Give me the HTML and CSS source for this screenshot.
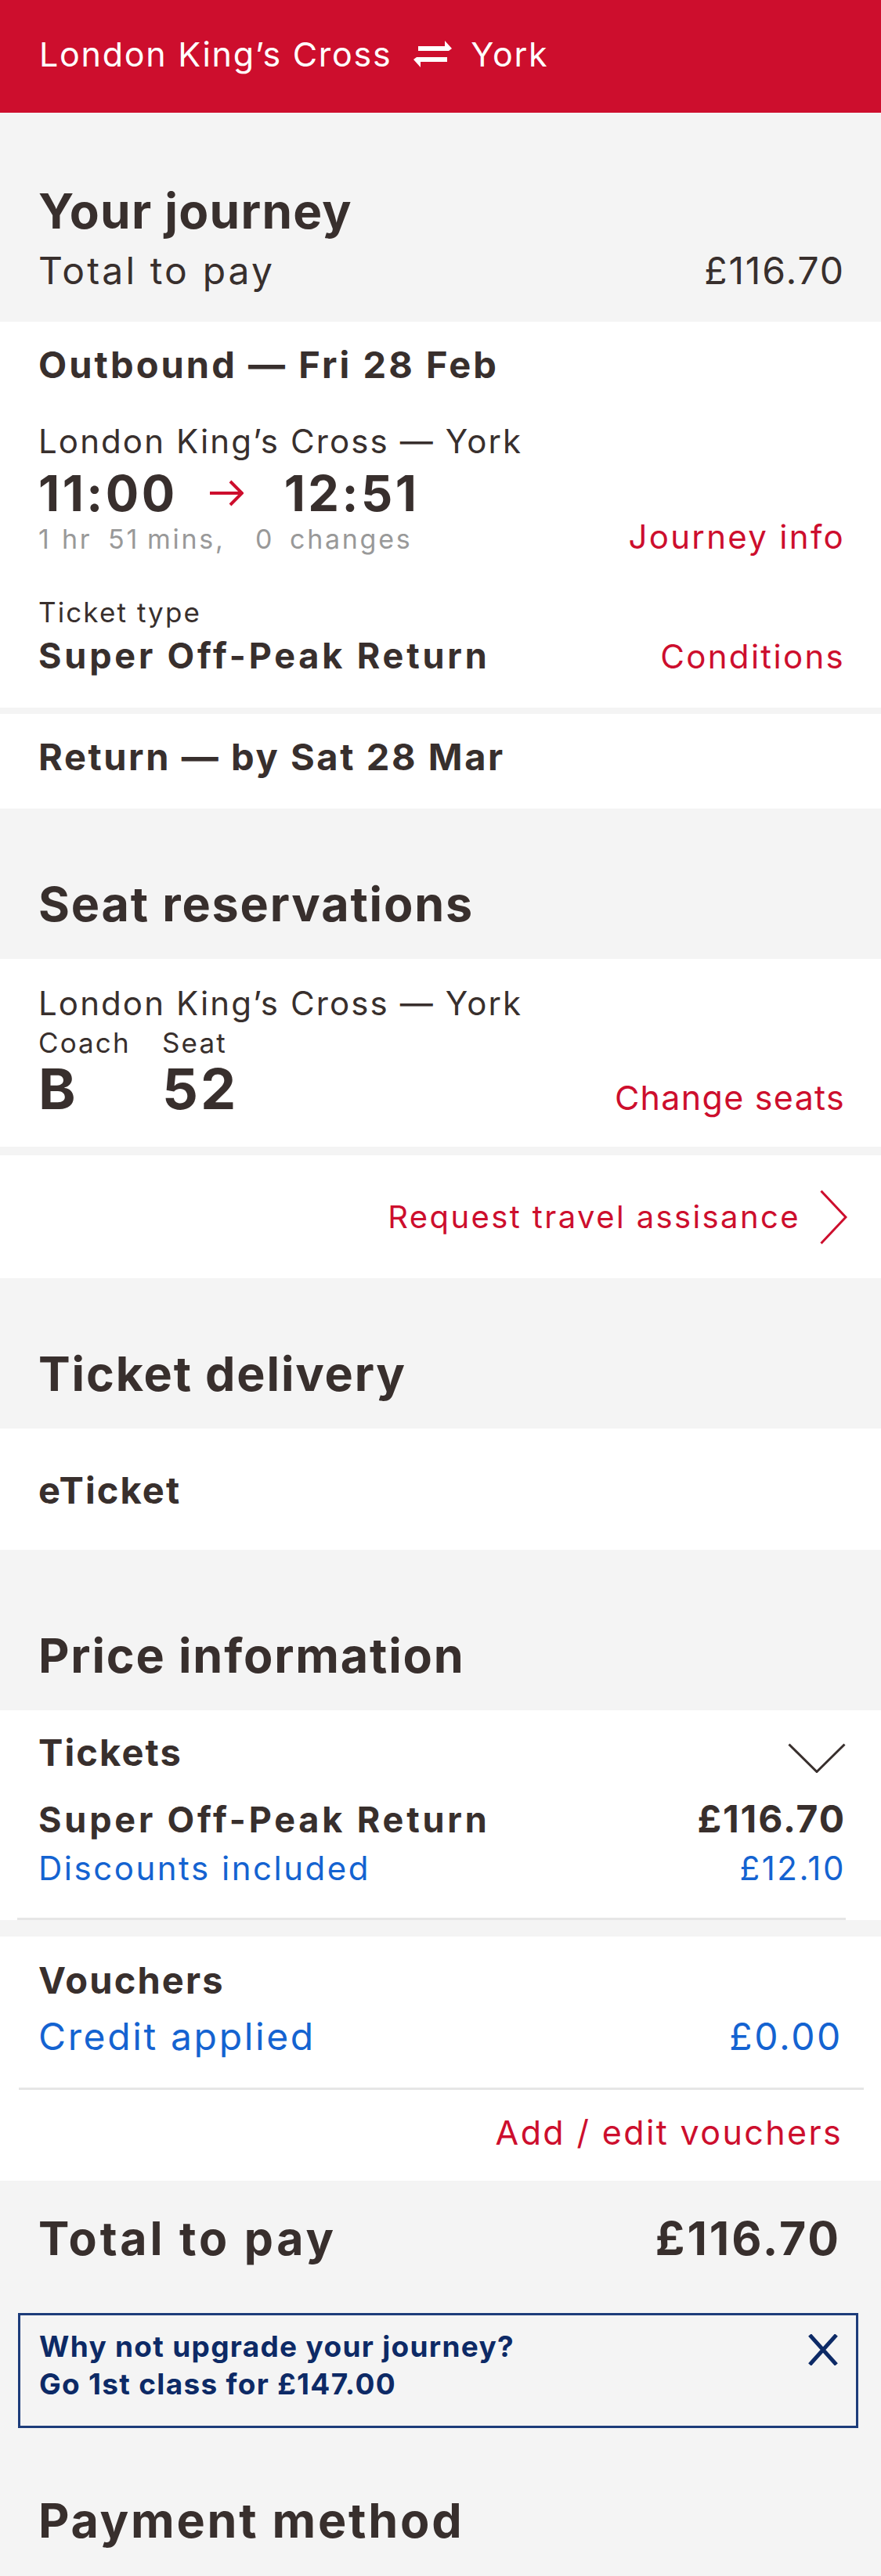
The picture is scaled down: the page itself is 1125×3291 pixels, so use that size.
FILE: index.html
```html
<!DOCTYPE html>
<html lang="en">
<head>
    <meta charset="UTF-8">
    <meta name="viewport" content="width=device-width, initial-scale=1.0">
    <title>Your journey</title>
    <link rel="stylesheet" href="styles.css">
</head>
<body>
    <header class="topbar">
        <span>London King’s Cross</span>
        <svg class="swap-icon" width="49" height="34" viewBox="0 0 49 34">
            <path d="M6 7h34V0l9 10-4 3H6z" fill="#fff"/>
            <path d="M43 27H9v7L0 24l4-3h39z" fill="#fff"/>
        </svg>
        <span>York</span>
    </header>

    <!-- Resumo da viagem -->
    <section class="group-head journey-head">
        <h2>Your journey</h2>
        <div class="row total-line">
            <span>Total to pay</span>
            <span class="total-amount">£116.70</span>
        </div>
    </section>

    <div class="card outbound">
        <h3>Outbound — Fri 28 Feb</h3>
        <p class="route">London King’s Cross — York</p>
        <div class="times">
            <span>11:00</span>
            <svg class="time-arrow" width="44" height="36" viewBox="0 0 44 36">
                <path d="M1 18h40M27 3l15 15-15 15" fill="none" stroke="#cd0e2d" stroke-width="4"/>
            </svg>
            <span>12:51</span>
        </div>
        <div class="row meta">
            <span class="duration"><span class="d-1">1</span><span class="d-hr">hr</span><span class="d-51">51</span><span class="d-mins">mins,</span><span class="d-0">0</span><span>changes</span></span>
            <a href="#" class="link">Journey info</a>
        </div>
        <p class="label ticket-label">Ticket type</p>
        <div class="row ticket-row">
            <span class="strong">Super Off-Peak Return</span>
            <a href="#" class="link">Conditions</a>
        </div>
    </div>

    <div class="card return">
        <h3>Return — by Sat 28 Mar</h3>
    </div>

    <!-- Lugares -->
    <section class="group-head seats-head">
        <h2>Seat reservations</h2>
    </section>

    <div class="card seats">
        <p class="route">London King’s Cross — York</p>
        <div class="row seat-row">
            <div class="seat-cols">
                <div class="seat-col coach">
                    <span class="label">Coach</span>
                    <span class="seat-val">B</span>
                </div>
                <div class="seat-col">
                    <span class="label">Seat</span>
                    <span class="seat-val">52</span>
                </div>
            </div>
            <a href="#" class="link change-link">Change seats</a>
        </div>
    </div>

    <div class="card assist">
        <a href="#" class="link assist-link">Request travel assisance</a>
        <svg width="35" height="70" viewBox="0 0 35 70">
            <path d="M1.5 1.5L33 35 1.5 68.5" fill="none" stroke="#cd0e2d" stroke-width="3"/>
        </svg>
    </div>

    <!-- Entrega -->
    <section class="group-head delivery-head">
        <h2>Ticket delivery</h2>
    </section>

    <div class="card eticket">
        <h3>eTicket</h3>
    </div>

    <!-- Preço -->
    <section class="group-head price-head">
        <h2>Price information</h2>
    </section>

    <div class="card tickets">
        <div class="tickets-inner">
            <div class="row tickets-top">
                <h3>Tickets</h3>
                <svg class="chev-down" width="74" height="38" viewBox="0 0 74 38">
                    <path d="M1.5 1.5L37 36.5 72.5 1.5" fill="none" stroke="#382f2d" stroke-width="3"/>
                </svg>
            </div>
            <div class="row fare-row">
                <span class="strong">Super Off-Peak Return</span>
                <span class="fare-price">£116.70</span>
            </div>
            <div class="row blue-row discount-row">
                <span>Discounts included</span>
                <span>£12.10</span>
            </div>
        </div>
    </div>

    <div class="card vouchers">
        <div class="pad">
            <h3>Vouchers</h3>
            <div class="row blue-row credit-row">
                <span>Credit applied</span>
                <span>£0.00</span>
            </div>
        </div>
        <div class="rule"></div>
        <div class="pad voucher-link">
            <a href="#" class="link">Add / edit vouchers</a>
        </div>
    </div>

    <!-- Total -->
    <section class="total-block">
        <div class="row grand-total">
            <span>Total to pay</span>
            <span class="grand-amount">£116.70</span>
        </div>

        <div class="upgrade">
            <div class="upgrade-text">
                <p>Why not upgrade your journey?</p>
                <p class="upgrade-price">Go 1st class for £147.00</p>
            </div>
            <svg class="close-icon" width="40" height="40" viewBox="0 0 40 40">
                <path d="M3 1l34 38M37 1L3 39" fill="none" stroke="#0d2a66" stroke-width="5"/>
            </svg>
        </div>

        <h2 class="payment-title">Payment method</h2>
    </section>
</body>
</html>
```

FILE: styles.css
```css
/* Estilos Gerais */
* {
    box-sizing: border-box;
    margin: 0;
    padding: 0;
}

body {
    font-family: "Inter", "Liberation Sans", sans-serif;
    background-color: #f4f4f4;
    color: #382f2d;
    width: 1125px;
    letter-spacing: 0.08em;
}

a {
    text-decoration: none;
}

.row {
    display: flex;
    justify-content: space-between;
    align-items: baseline;
}

.link {
    color: #cd0e2d;
    font-size: 42px;
    line-height: 36px;
    letter-spacing: 0.055em;
}

.strong {
    font-size: 45px;
    font-weight: 700;
    line-height: 52px;
    letter-spacing: 0.085em;
}

h2 {
    font-size: 61px;
    font-weight: 700;
    line-height: 70px;
    letter-spacing: 0.03em;
}

h3 {
    font-size: 47px;
    font-weight: 700;
    line-height: 56px;
    letter-spacing: 0.045em;
}

/* Cabeçalho */
.topbar {
    background-color: #cd0e2d;
    color: white;
    height: 144px;
    display: flex;
    align-items: center;
    padding: 0 0 7px 50px;
    font-size: 43px;
    letter-spacing: 0.04em;
}

.swap-icon {
    margin: 0 24px 0 28px;
}

/* Blocos cinzentos */
.group-head {
    padding: 0 46px 35px 49px;
}

.journey-head {
    padding-top: 91px;
    padding-bottom: 37px;
}

.journey-head h2 {
    font-size: 62px;
    letter-spacing: 0.02em;
}

.total-line {
    margin-top: 13px;
    font-size: 48px;
    line-height: 56px;
    letter-spacing: 0.065em;
}

.total-amount {
    letter-spacing: 0.04em;
}

.seats-head,
.delivery-head {
    padding-top: 87px;
}

.price-head {
    padding-top: 100px;
}

/* Cartões */
.card {
    background-color: #fff;
    padding: 0 46px 0 49px;
}

.outbound {
    padding-top: 27px;
    padding-bottom: 40px;
}

.outbound h3 {
    letter-spacing: 0.065em;
}

.route {
    font-size: 42px;
    line-height: 48px;
    letter-spacing: 0.05em;
}

.outbound .route {
    margin-top: 46px;
}

.times {
    display: flex;
    align-items: center;
    margin-top: 10px;
    font-size: 63px;
    font-weight: 700;
    line-height: 64px;
    letter-spacing: 0.055em;
}

.time-arrow {
    margin: 0 52px 0 40px;
}

.meta {
    margin-top: 6px;
}

.duration {
    display: flex;
    color: #999;
    font-size: 34px;
    line-height: 40px;
    letter-spacing: 0.08em;
}

.d-1 {
    width: 30px;
}

.d-hr {
    width: 59px;
}

.d-51 {
    width: 50px;
}

.d-mins {
    width: 138px;
}

.d-0 {
    width: 44px;
}

.label {
    font-size: 35px;
    line-height: 40px;
    letter-spacing: 0.06em;
}

.ticket-label {
    margin-top: 53px;
}

.ticket-row {
    margin-top: 10px;
}

.return {
    margin-top: 8px;
    padding-top: 27px;
    padding-bottom: 38px;
}

.return h3 {
    letter-spacing: 0.055em;
}

/* Lugares */
.seats {
    padding-top: 33px;
    padding-bottom: 42px;
}

.seat-row {
    margin-top: 6px;
    align-items: flex-end;
}

.seat-cols {
    display: flex;
}

.seat-col {
    display: flex;
    flex-direction: column;
}

.coach {
    width: 158px;
}

.seat-val {
    margin-top: 7px;
    font-size: 72px;
    font-weight: 700;
    line-height: 64px;
    letter-spacing: 0.04em;
}

.change-link {
    font-size: 43px;
    line-height: 41px;
    letter-spacing: 0.03em;
}

.assist {
    margin-top: 11px;
    height: 157px;
    display: flex;
    justify-content: flex-end;
    align-items: center;
    padding-right: 43px;
}

.assist-link {
    font-size: 40px;
    letter-spacing: 0.06em;
    margin-right: 25px;
}

.eticket {
    padding-top: 51px;
    padding-bottom: 48px;
}

/* Preço */
.tickets {
    padding: 26px 0 0 0;
}

.tickets-inner {
    margin: 0 45px 0 22px;
    padding: 0 0 39px 27px;
    border-bottom: 3px solid #e6e6e6;
}

.tickets-top {
    align-items: center;
}

.chev-down {
    margin-top: 14px;
}

.fare-row {
    margin-top: 31px;
}

.fare-price {
    font-size: 48px;
    font-weight: 700;
    line-height: 52px;
    letter-spacing: 0.04em;
}

.blue-row {
    color: #1463d1;
}

.discount-row {
    margin-top: 12px;
    font-size: 42px;
    line-height: 48px;
    letter-spacing: 0.06em;
}

.vouchers {
    margin-top: 21px;
    padding: 28px 0 38px 0;
}

.vouchers .pad {
    padding: 0 49px;
}

.credit-row {
    margin-top: 16px;
    font-size: 48px;
    line-height: 56px;
    letter-spacing: 0.055em;
}

.rule {
    margin: 37px 22px 0 24px;
    height: 3px;
    background-color: #e6e6e6;
}

.voucher-link {
    margin-top: 30px;
    text-align: right;
}

.voucher-link .link {
    font-size: 43px;
    line-height: 48px;
    letter-spacing: 0.055em;
}

/* Total */
.total-block {
    padding: 40px 0 35px 0;
}

.grand-total {
    padding: 0 51px 0 49px;
    font-size: 59px;
    font-weight: 700;
    line-height: 68px;
    letter-spacing: 0.065em;
}

.grand-amount {
    letter-spacing: 0.05em;
}

.upgrade {
    margin: 61px 29px 0 23px;
    border: 3px solid #1d3c7a;
    padding: 18px 22px 31px 24px;
    display: flex;
    justify-content: space-between;
    align-items: flex-start;
    color: #0d2a66;
    font-size: 37px;
    font-weight: 700;
    line-height: 44px;
    letter-spacing: 0.035em;
}

.upgrade-price {
    margin-top: 4px;
}

.close-icon {
    margin-top: 6px;
}

.payment-title {
    margin-top: 83px;
    padding-left: 49px;
    letter-spacing: 0.045em;
}
```
